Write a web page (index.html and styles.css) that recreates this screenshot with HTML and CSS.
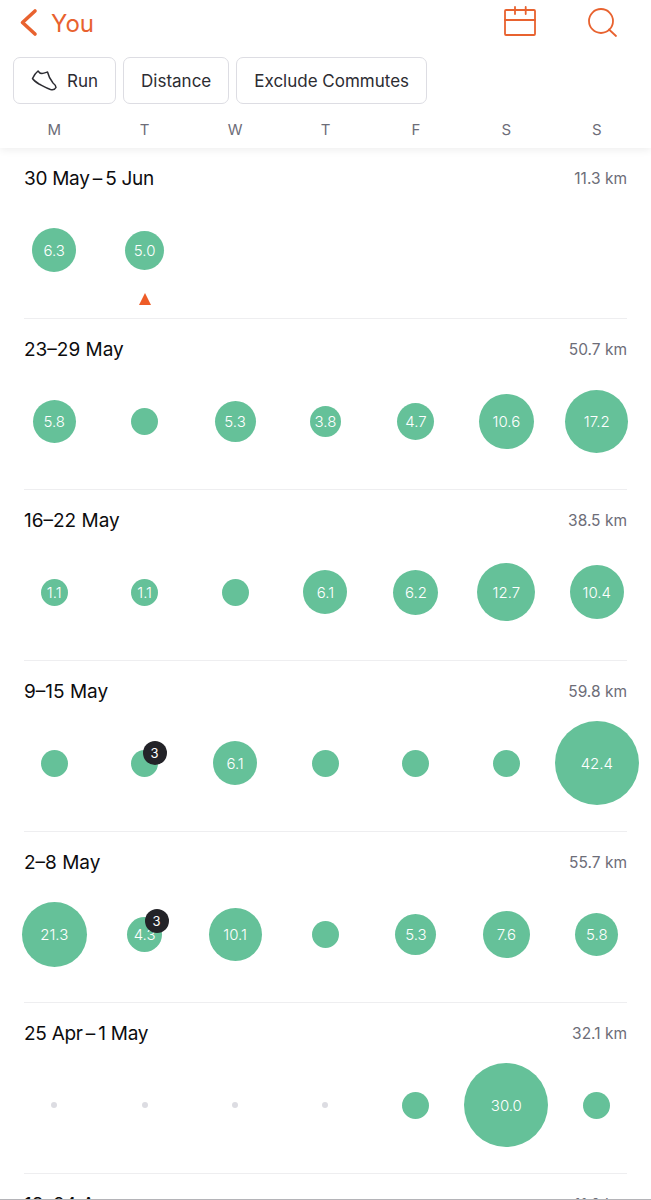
FILE: index.html
```html
<!DOCTYPE html>
<html>
<head>
    <title>You</title>
    <meta charset="UTF-8">
    <link rel="stylesheet" href="styles.css">
</head>
<body>
    <div class="top">
        <div class="nav">
            <a class="back">
                <svg class="chevron" width="20" height="30" viewBox="0 0 20 30"><path d="M16 3 L3.500 14.500 L16 26"/></svg>
                <span>You</span>
            </a>
            <div class="nav-icons">
                <svg class="icon" width="32" height="30" viewBox="0 0 32 30"><rect x="1" y="4" width="30" height="25" rx="1"/><path d="M1 14 H31 M11 1 V8 M21.700 1 V8"/></svg>
                <svg class="icon" width="30" height="32" viewBox="0 0 30 32"><circle cx="13" cy="15" r="12"/><path d="M21 23.500 L28 30"/></svg>
            </div>
        </div>
        <div class="filters">
            <button class="filter">
                <svg class="shoe" width="26" height="21" viewBox="0 0 26 21"><path d="M1.500 8.500 C3 5.500 5 2.500 7 1 C8 2.500 10 3.500 11 3.500 C13 3.500 15 2.500 16.500 2 C17.500 6 19.500 10 22 13 C24 14.500 25 16 25 17.500 C24 19.500 21.500 20 19.500 19.500 C15 18 11 15.500 8 14 C5.500 12.500 3 11 1.500 8.500 Z"/></svg>
                Run
            </button>
            <button class="filter">Distance</button>
            <button class="filter">Exclude Commutes</button>
        </div>
        <div class="days">
            <span>M</span><span>T</span><span>W</span><span>T</span><span>F</span><span>S</span><span>S</span>
        </div>
    </div>

    <div class="week">
        <div class="week-head"><span class="range">30 May&#8201;–&#8201;5 Jun</span><span class="total">11.3 km</span></div>
        <div class="row">
            <div class="cell"><div class="bubble" style="width:44px">6.3</div></div>
            <div class="cell"><div class="bubble" style="width:39px">5.0</div><div class="today"></div></div>
            <div class="cell"></div><div class="cell"></div><div class="cell"></div><div class="cell"></div><div class="cell"></div>
        </div>
    </div>

    <div class="week">
        <div class="week-head"><span>23–29 May</span><span class="total">50.7 km</span></div>
        <div class="row">
            <div class="cell"><div class="bubble" style="width:43px">5.8</div></div>
            <div class="cell"><div class="bubble" style="width:27px"></div></div>
            <div class="cell"><div class="bubble" style="width:41px">5.3</div></div>
            <div class="cell"><div class="bubble" style="width:31px">3.8</div></div>
            <div class="cell"><div class="bubble" style="width:37px">4.7</div></div>
            <div class="cell"><div class="bubble" style="width:55px">10.6</div></div>
            <div class="cell"><div class="bubble" style="width:63px">17.2</div></div>
        </div>
    </div>

    <div class="week">
        <div class="week-head"><span>16–22 May</span><span class="total">38.5 km</span></div>
        <div class="row">
            <div class="cell"><div class="bubble" style="width:27px">1.1</div></div>
            <div class="cell"><div class="bubble" style="width:27px">1.1</div></div>
            <div class="cell"><div class="bubble" style="width:27px"></div></div>
            <div class="cell"><div class="bubble" style="width:44px">6.1</div></div>
            <div class="cell"><div class="bubble" style="width:45px">6.2</div></div>
            <div class="cell"><div class="bubble" style="width:58px">12.7</div></div>
            <div class="cell"><div class="bubble" style="width:54px">10.4</div></div>
        </div>
    </div>

    <div class="week">
        <div class="week-head"><span>9–15 May</span><span class="total">59.8 km</span></div>
        <div class="row">
            <div class="cell"><div class="bubble" style="width:27px"></div></div>
            <div class="cell"><div class="bubble" style="width:27px"></div><div class="count">3</div></div>
            <div class="cell"><div class="bubble" style="width:44px">6.1</div></div>
            <div class="cell"><div class="bubble" style="width:27px"></div></div>
            <div class="cell"><div class="bubble" style="width:27px"></div></div>
            <div class="cell"><div class="bubble" style="width:27px"></div></div>
            <div class="cell"><div class="bubble" style="width:84px">42.4</div></div>
        </div>
    </div>

    <div class="week">
        <div class="week-head"><span>2–8 May</span><span class="total">55.7 km</span></div>
        <div class="row">
            <div class="cell"><div class="bubble" style="width:65px">21.3</div></div>
            <div class="cell"><div class="bubble" style="width:35px">4.3</div><div class="count count-big">3</div></div>
            <div class="cell"><div class="bubble" style="width:53px">10.1</div></div>
            <div class="cell"><div class="bubble" style="width:27px"></div></div>
            <div class="cell"><div class="bubble" style="width:41px">5.3</div></div>
            <div class="cell"><div class="bubble" style="width:47px">7.6</div></div>
            <div class="cell"><div class="bubble" style="width:43px">5.8</div></div>
        </div>
    </div>

    <div class="week">
        <div class="week-head"><span class="range">25 Apr&#8201;–&#8201;1 May</span><span class="total">32.1 km</span></div>
        <div class="row">
            <div class="cell"><div class="dot"></div></div>
            <div class="cell"><div class="dot"></div></div>
            <div class="cell"><div class="dot"></div></div>
            <div class="cell"><div class="dot"></div></div>
            <div class="cell"><div class="bubble" style="width:27px"></div></div>
            <div class="cell"><div class="bubble" style="width:84px">30.0</div></div>
            <div class="cell"><div class="bubble" style="width:27px"></div></div>
        </div>
    </div>

    <div class="week">
        <div class="week-head"><span>18–24 Apr</span><span class="total">11.0 km</span></div>
    </div>

    <div class="edge"></div>
</body>
</html>
```

FILE: styles.css
```css
html, body {
    margin: 0;
    height: 1200px;
    overflow: hidden;
}

body {
    position: relative;
    background-color: #fff;
    color: #111;
    font-family: "Inter", "Liberation Sans", sans-serif;
}

.top {
    height: 148px;
    box-shadow: 0 2px 8px rgba(0, 0, 0, 0.07);
    position: relative;
    background-color: #fff;
}

.nav {
    height: 57px;
    display: flex;
    justify-content: space-between;
    padding: 0 33px 0 19px;
    box-sizing: border-box;
}

.back {
    display: flex;
    align-items: center;
    height: 46px;
    gap: 12px;
    color: #e8622f;
    font-size: 24px;
}

.chevron {
    fill: none;
    stroke: #e8622f;
    stroke-width: 3.6;
    stroke-linecap: round;
    stroke-linejoin: round;
}

.nav-icons {
    display: flex;
    align-items: flex-start;
    gap: 52px;
    padding-top: 6px;
}

.icon {
    fill: none;
    stroke: #e8622f;
    stroke-width: 1.8;
    stroke-linecap: round;
}

.filters {
    display: flex;
    gap: 7px;
    padding-left: 13px;
}

.filter {
    height: 47px;
    padding: 0 17px;
    display: flex;
    align-items: center;
    gap: 10px;
    background-color: #fff;
    border: 1.5px solid #dddde3;
    border-radius: 7px;
    color: #2c2c32;
    font-family: inherit;
    font-size: 17px;
}

.shoe {
    fill: none;
    stroke: #2c2c32;
    stroke-width: 1.5;
    stroke-linejoin: round;
    stroke-linecap: round;
}

.days {
    display: grid;
    grid-template-columns: repeat(7, 1fr);
    padding: 13px 9px 0;
    color: #6d6d78;
    font-size: 15px;
    line-height: 26px;
    text-align: center;
}

.week {
    height: 171px;
    box-sizing: border-box;
    margin: 0 24px;
    border-bottom: 1px solid #eeeef0;
}

.week-head {
    display: flex;
    justify-content: space-between;
    align-items: center;
    height: 59px;
    padding-top: 1px;
    box-sizing: border-box;
    font-size: 19px;
    color: #0c0c0e;
}

/* ranges over two months have the thin spaces, pull them in a bit */
.range {
    letter-spacing: -0.28px;
}

.total {
    color: #6d6d78;
    font-size: 15.5px;
}

.row {
    display: grid;
    grid-template-columns: repeat(7, 1fr);
    height: 86px;
    margin: 0 -15px;
}

.cell {
    position: relative;
    display: flex;
    align-items: center;
    justify-content: center;
}

.bubble {
    aspect-ratio: 1;
    display: flex;
    align-items: center;
    justify-content: center;
    border-radius: 50%;
    background-color: #65c199;
    color: #fff;
    font-size: 15px;
    font-weight: 300;
}

.dot {
    width: 6px;
    height: 6px;
    border-radius: 50%;
    background-color: #dcdce2;
}

.count {
    position: absolute;
    left: 50%;
    top: 50%;
    width: 24px;
    height: 24px;
    margin: -22px 0 0 -2px;
    display: flex;
    align-items: center;
    justify-content: center;
    border-radius: 50%;
    background-color: #232328;
    color: #fff;
    font-size: 13px;
}

.count-big {
    margin: -25px 0 0 0;
}

.today {
    position: absolute;
    left: 50%;
    top: 50%;
    margin: 43px 0 0 -6px;
    border-left: 6px solid transparent;
    border-right: 6px solid transparent;
    border-bottom: 12px solid #ee5c27;
}

/* thin line along the bottom edge of the screenshot */
.edge {
    position: absolute;
    left: 0;
    right: 0;
    top: 1199px;
    height: 1px;
    background-color: #b4b4b8;
}
```
